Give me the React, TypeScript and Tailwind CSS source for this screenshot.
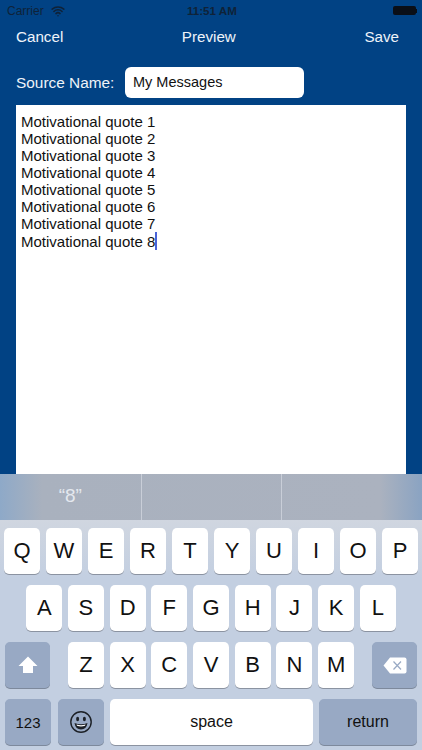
import { Wifi } from 'lucide-react';

const FONT = "font-['Liberation_Sans',Arial,sans-serif]";

const ROW_1 = ['Q', 'W', 'E', 'R', 'T', 'Y', 'U', 'I', 'O', 'P'];
const ROW_2 = ['A', 'S', 'D', 'F', 'G', 'H', 'J', 'K', 'L'];
const ROW_3 = ['Z', 'X', 'C', 'V', 'B', 'N', 'M'];
const QUOTES = [1, 2, 3, 4, 5, 6, 7];

function Key({ label }: { label: string }) {
  return (
    <div className="flex h-[46px] w-[36px] items-center justify-center rounded-[5px] bg-white text-[22px] leading-none text-[#111] shadow-[0_1px_0_#8b93a1]">
      {label}
    </div>
  );
}

function ShiftIcon() {
  return (
    <svg width="20" height="18" viewBox="0 0 20 18">
      <path d="M10 0.5 L19.5 10 H15 V17 H5 V10 H0.5 Z" fill="#fff" />
    </svg>
  );
}

function DeleteIcon() {
  return (
    <svg width="24" height="17" viewBox="0 0 24 17">
      <path d="M7 0.5 H21.5 Q23.5 0.5 23.5 2.5 V14.5 Q23.5 16.5 21.5 16.5 H7 L0.5 8.5 Z" fill="#fff" />
      <path d="M10.5 4.5 L18 12.5 M18 4.5 L10.5 12.5" stroke="#98a9c4" strokeWidth="1.2" fill="none" />
    </svg>
  );
}

function SmileyIcon() {
  return (
    <svg width="24" height="24" viewBox="0 0 24 24">
      <circle cx="12" cy="12" r="10.2" fill="none" stroke="#1c2026" strokeWidth="1.4" />
      <ellipse cx="8.6" cy="9" rx="1.5" ry="2.2" fill="#1c2026" />
      <ellipse cx="15.4" cy="9" rx="1.5" ry="2.2" fill="#1c2026" />
      <path d="M5.5 13 Q12 15.5 18.5 13 Q17.5 19.5 12 19.5 Q6.5 19.5 5.5 13 Z" fill="#1c2026" />
      <path d="M7.5 14.6 Q12 16 16.5 14.6 L16 15.8 Q12 17 8 15.8 Z" fill="#fff" />
    </svg>
  );
}

export default function App() {
  return (
    <div className={`${FONT} flex h-[750px] w-[422px] flex-col overflow-hidden bg-[#014284]`}>
      {/* Status bar */}
      <div className="relative flex h-[21px] items-center justify-between pl-[7px] pr-[5px] text-[12px] text-[#0f2238]">
        <div className="flex items-center gap-[7px]">
          <span>Carrier</span>
          <Wifi size={14} strokeWidth={2.6} />
        </div>
        <span className="absolute left-[187px] text-[11.6px] font-bold">11:51 AM</span>
        <div className="flex items-center">
          <div className="h-[9px] w-[23px] rounded-[2px] bg-[#0a0f18]" />
          <div className="h-[4px] w-[1px] bg-[#0a0f18]" />
        </div>
      </div>

      {/* Nav */}
      <div className="mt-[5px] flex h-[22px] items-center justify-between pl-[16px] pr-[23px] text-[15.2px] text-[#eef3f9]">
        <span>Cancel</span>
        <span className="pr-[10px]">Preview</span>
        <span>Save</span>
      </div>

      {/* Source name */}
      <div className="mt-[19px] flex items-center pl-[16px]">
        <span className="w-[109px] text-[15.4px] text-[#eef3f9]">Source Name:</span>
        <div className="flex h-[31px] w-[179px] items-center rounded-[6px] bg-white pl-[8px] text-[14.5px] text-[#111]">
          My Messages
        </div>
      </div>

      {/* Text area */}
      <div className="mx-[16px] mt-[7px] h-[369px] bg-white pl-[5px] pt-[8px] text-[15px] leading-[17px] text-[#111]">
        {QUOTES.map((n) => (
          <div key={n}>Motivational quote {n}</div>
        ))}
        <div className="flex items-center">
          <span>Motivational quote 8</span>
          <span className="h-[18px] w-[2px] bg-[#4a63d8]" />
        </div>
      </div>

      {/* Suggestions */}
      <div className="grid h-[46px] grid-cols-3 bg-[linear-gradient(90deg,#8ea9c8_0%,#a9b1be_10%,#abb2bf_90%,#8aa3c2_100%)] text-[19px] text-[#e4e8ee]">
        <div className="flex items-center justify-center pb-[1px]">“8”</div>
        <div className="border-l border-[#c9ced8]" />
        <div className="border-l border-[#c9ced8]" />
      </div>

      {/* Keyboard */}
      <div className="flex flex-1 flex-col gap-[11px] bg-[linear-gradient(180deg,#d0d6e0_0%,#c3cfe1_25%,#c3cfe1_100%)] pt-[8px]">
        <div className="flex justify-between px-[4px]">
          {ROW_1.map((k) => (
            <Key key={k} label={k} />
          ))}
        </div>
        <div className="flex justify-center gap-[5.7px]">
          {ROW_2.map((k) => (
            <Key key={k} label={k} />
          ))}
        </div>
        <div className="flex items-center justify-between pl-[5px] pr-[5px]">
          <div className="flex h-[46px] w-[45px] items-center justify-center rounded-[5px] bg-[#98a9c4] shadow-[0_1px_0_#7d899c]">
            <ShiftIcon />
          </div>
          <div className="flex gap-[5.7px]">
            {ROW_3.map((k) => (
              <Key key={k} label={k} />
            ))}
          </div>
          <div className="flex h-[46px] w-[45px] items-center justify-center rounded-[5px] bg-[#98a9c4] shadow-[0_1px_0_#7d899c]">
            <DeleteIcon />
          </div>
        </div>
        <div className="flex gap-[6px] pl-[5px] text-[16px] leading-none text-[#111]">
          <div className="mr-[1px] flex h-[46px] w-[46px] items-center justify-center rounded-[5px] bg-[#98a9c4] text-[15px] shadow-[0_1px_0_#7d899c]">
            123
          </div>
          <div className="flex h-[46px] w-[46px] items-center justify-center rounded-[5px] bg-[#98a9c4] shadow-[0_1px_0_#7d899c]">
            <SmileyIcon />
          </div>
          <div className="flex h-[46px] w-[203px] items-center justify-center rounded-[5px] bg-white shadow-[0_1px_0_#8b93a1]">
            space
          </div>
          <div className="flex h-[46px] w-[98px] items-center justify-center rounded-[5px] bg-[#98a9c4] shadow-[0_1px_0_#7d899c]">
            return
          </div>
        </div>
      </div>
    </div>
  );
}
